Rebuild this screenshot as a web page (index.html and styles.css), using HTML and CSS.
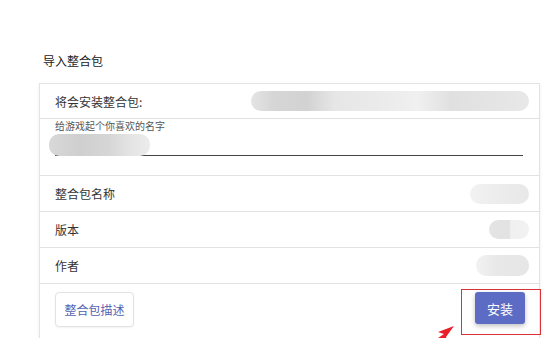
FILE: index.html
```html
<!DOCTYPE html>
<html lang="zh">
<head>
<meta charset="utf-8">
<link rel="stylesheet" href="styles.css">
</head>
<body>
<div class="page">
  <div class="title">导入整合包</div>
  <div class="card">
    <div class="row row-first">
      <span class="label">将会安装整合包:</span>
      <span class="blur blur-path"></span>
    </div>
    <div class="field">
      <div class="field-label">给游戏起个你喜欢的名字</div>
      <div class="field-input"><span class="blur blur-input"></span></div>
    </div>
    <div class="row">
      <span class="label">整合包名称</span>
      <span class="blur blur-name"></span>
    </div>
    <div class="row">
      <span class="label">版本</span>
      <span class="blur blur-ver"></span>
    </div>
    <div class="row">
      <span class="label">作者</span>
      <span class="blur blur-author"></span>
    </div>
    <div class="footer">
      <button class="btn-outline">整合包描述</button>
      <button class="btn-primary">安装</button>
    </div>
    <div class="highlight"></div>
    <svg class="arrow" width="30" height="16" viewBox="0 0 30 16"><polygon points="22,0 6,6 12,8 0,16 16,16 14,11" fill="#e8202a"/></svg>
  </div>
</div>
</body>
</html>
```

FILE: styles.css
```css
html, body {
  margin: 0;
  padding: 0;
  background: #ffffff;
}
body {
  font-family: "Noto Sans CJK SC", "Noto Sans", sans-serif;
  color: #333;
  width: 555px;
  height: 338px;
  overflow: hidden;
}
.page {
  padding: 52px 0 0 39px;
}
.title {
  font-size: 12px;
  line-height: 17px;
  color: #222;
  padding-left: 4px;
}
.card {
  position: relative;
  margin-top: 14px;
  width: 499px;
  border: 1px solid #e4e4e4;
  border-bottom-color: #d0d0d0;
  box-shadow: 0 1px 3px rgba(0,0,0,0.08);
  background: #fff;
}
.row {
  height: 35px;
  border-top: 1px solid #e2e2e2;
  display: flex;
  align-items: center;
  justify-content: space-between;
  padding: 0 10px 0 15px;
}
.row-first {
  border-top: none;
  height: 34px;
}
.label {
  font-size: 12px;
  color: #333;
}
.field {
  border-top: 1px solid #e2e2e2;
  height: 56px;
  padding: 0 16px 0 15px;
  position: relative;
}
.field-label {
  font-size: 10px;
  line-height: 12px;
  color: #555;
  padding-top: 1px;
}
.field-input {
  height: 23px;
  border-bottom: 1px solid #444;
  position: relative;
}
.blur {
  display: block;
  border-radius: 10px;
}
.blur-path {
  width: 278px;
  height: 20px;
  background: linear-gradient(90deg, #e4e4e4 0%, #d6d6d6 8%, #d2d2d2 20%, #e6e6e6 30%, #ececec 50%, #f0f0f0 60%, #e0e0e0 72%, #e8e8e8 100%);
}
.blur-input {
  position: absolute;
  left: -6px;
  top: 2px;
  width: 101px;
  height: 22px;
  background: linear-gradient(90deg, #d8d8d8 0%, #cfcfcf 30%, #d6d6d6 60%, #e4e4e4 80%, #ececec 100%);
}
.blur-name {
  width: 59px;
  height: 20px;
  background: linear-gradient(90deg, #f2f2f2 0%, #ededed 40%, #e8e8e8 100%);
}
.blur-ver {
  width: 40px;
  height: 19px;
  background: linear-gradient(90deg, #e4e4e4 0%, #e2e2e2 50%, #f0f0f0 55%, #f2f2f2 100%);
}
.blur-author {
  width: 53px;
  height: 21px;
  background: linear-gradient(90deg, #f2f2f2 0%, #e8e8e8 40%, #e6e6e6 100%);
}
.footer {
  border-top: 1px solid #e2e2e2;
  height: 53px;
  display: flex;
  justify-content: space-between;
  align-items: flex-start;
  padding: 8px 14px 0 15px;
}
.btn-outline {
  font-family: inherit;
  font-size: 12px;
  color: #5561b0;
  background: #fff;
  border: 1px solid #e2e2e2;
  border-radius: 4px;
  width: 79px;
  height: 35px;
  padding: 0;
  box-shadow: 0 1px 2px rgba(0,0,0,0.05);
}
.btn-primary {
  font-family: inherit;
  font-size: 13px;
  color: #fff;
  background: #5c6bc4;
  border: none;
  border-radius: 3px;
  width: 50px;
  height: 32px;
  padding: 0;
  box-shadow: 0 2px 5px rgba(0,0,0,0.25);
}
.highlight {
  position: absolute;
  left: 421px;
  top: 205px;
  width: 78px;
  height: 44px;
  border: 1px solid #d8323a;
}
.arrow {
  position: absolute;
  left: 392px;
  top: 242px;
}
```
